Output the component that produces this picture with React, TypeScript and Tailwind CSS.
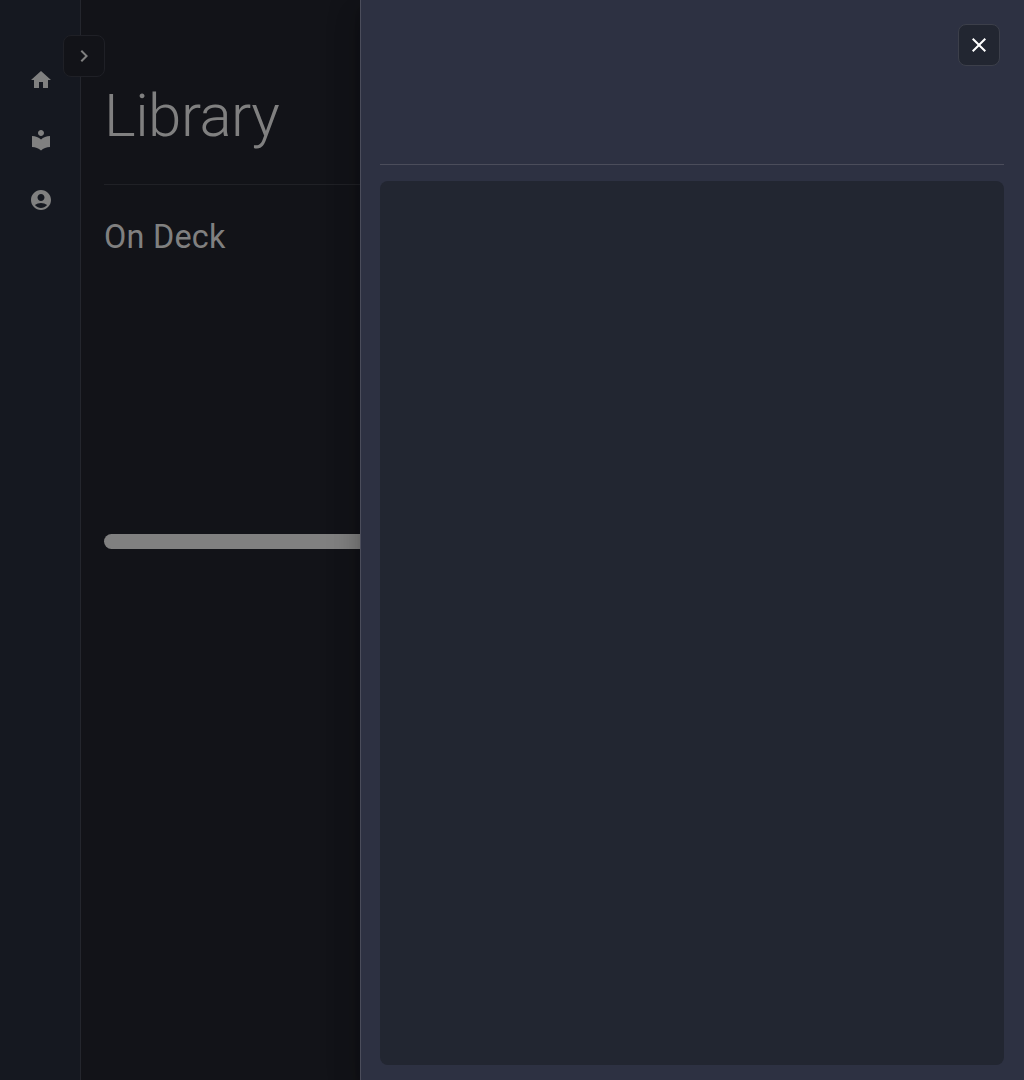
import React from "react";
import { MdHome, MdLocalLibrary, MdAccountCircle, MdChevronRight, MdClose } from "react-icons/md";

const navItems = [
  { label: "Home", Icon: MdHome },
  { label: "Library", Icon: MdLocalLibrary },
  { label: "Account", Icon: MdAccountCircle },
];

function Sidebar() {
  return (
    <aside className="relative w-[81px] shrink-0 border-r border-[#24262d] bg-[#151820]">
      <nav className="flex flex-col items-center gap-9 pt-[68px] pl-0.5">
        {navItems.map(({ label, Icon }) => (
          <a key={label} aria-label={label} className="text-[#808080]">
            <Icon size={24} />
          </a>
        ))}
      </nav>
      <button
        aria-label="Expand"
        className="absolute top-[35px] left-[63px] flex size-[42px] items-center justify-center rounded-lg border border-[#1f2026] bg-[#121318] text-[#808080]"
      >
        <MdChevronRight size={24} />
      </button>
    </aside>
  );
}

function Drawer() {
  return (
    <section className="z-10 flex w-[664px] shrink-0 flex-col border-l border-[#4b4d5b] bg-[#2d3142] pr-5 pb-[15px] pl-[19px] shadow-[0_8px_10px_-5px_rgba(0,0,0,0.2),0_16px_24px_2px_rgba(0,0,0,0.14),0_6px_30px_5px_rgba(0,0,0,0.12)]">
      <header className="flex h-[165px] shrink-0 items-start justify-end border-b border-[#4b4d5b] pt-6 pr-1">
        <button
          aria-label="Close"
          className="flex size-[42px] items-center justify-center rounded-lg border border-[#3c3f4a] bg-[#222631] text-white"
        >
          <MdClose size={24} />
        </button>
      </header>
      <div className="mt-4 flex-1 rounded-lg bg-[#222631]" />
    </section>
  );
}

export default function App() {
  return (
    <div className="flex h-[1080px] w-[1024px] overflow-hidden bg-[#121318] font-['Roboto',sans-serif] text-[#808080]">
      <Sidebar />
      <main className="min-w-0 flex-1 pt-20 pl-[23px]">
        <h1 className="h-[105px] border-b border-[#202126] text-[60px] leading-[72px] font-light tracking-[-0.5px]">
          Library
        </h1>
        <h2 className="mt-8 text-[2.0243rem] leading-10 tracking-[0.00735em] whitespace-nowrap">On Deck</h2>
        <div className="mt-[277px] h-[15px] rounded-l-full bg-[#808080]" />
      </main>
      <Drawer />
    </div>
  );
}
